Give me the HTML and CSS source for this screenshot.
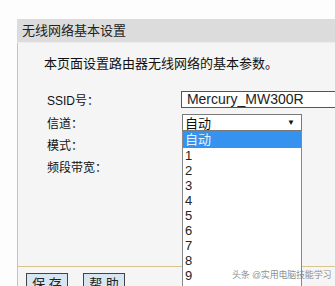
FILE: index.html
```html
<!DOCTYPE html>
<html>
<head>
<meta charset="utf-8">
<link rel="stylesheet" href="styles.css">
</head>
<body>
<div class="panel">
  <div class="head">无线网络基本设置</div>
  <div class="content">
    <p class="intro">本页面设置路由器无线网络的基本参数。</p>
    <div class="form">
      <div class="row"><span class="label">SSID号：</span><div class="input">Mercury_MW300R</div></div>
      <div class="row"><span class="label">信道：</span>
        <div class="selwrap">
          <div class="select"><span>自动</span><span class="arrow">▼</span></div>
          <ul class="list">
            <li class="sel">自动</li>
            <li>1</li><li>2</li><li>3</li><li>4</li><li>5</li><li>6</li><li>7</li><li>8</li><li>9</li><li>10</li>
          </ul>
        </div>
      </div>
      <div class="row"><span class="label">模式：</span></div>
      <div class="row"><span class="label">频段带宽：</span></div>
    </div>
  </div>
  <div class="foot">
    <span class="btn">保 存</span>
    <span class="btn">帮 助</span>
  </div>
</div>
<div class="mark">头条 @实用电脑技能学习</div>
</body>
</html>
```
FILE: styles.css
```css
html, body { margin: 0; padding: 0; }
body {
  background: #fdfdfd;
  width: 335px;
  height: 286px;
  overflow: hidden;
  position: relative;
  font-family: "Liberation Sans", "Noto Sans CJK SC", sans-serif;
  color: #111;
}
.panel {
  margin: 19px 0 0 17px;
  width: 340px;
}
.head {
  height: 23px;
  line-height: 24px;
  background: #dcdcdc;
  padding-left: 5px;
  font-size: 13px;
  color: #222;
  border-bottom: 1px solid #ececec;
}
.content {
  background: #f5f5f5;
  border-left: 1px solid #d8c48e;
  height: 222px;
  padding-top: 1px;
}
.intro {
  margin: 12px 0 0 26px;
  font-size: 13px;
  line-height: 16px;
}
.form {
  margin: 17px 0 0 29px;
}
.row {
  display: flex;
  align-items: center;
  height: 22px;
  font-size: 12px;
}
.row:first-child { height: 20px; margin-bottom: 2px; }
.label { width: 137px; }
.input {
  box-sizing: border-box;
  width: 180px;
  height: 17px;
  border: 1px solid #555;
  background: #fff;
  font-size: 14px;
  line-height: 15px;
  padding-left: 5px;
  color: #222;
}
.selwrap {
  position: relative;
  margin-left: -2px;
}
.select {
  box-sizing: border-box;
  width: 120px;
  height: 17px;
  border: 1px solid #7a7a7a;
  background: #fff;
  display: flex;
  justify-content: space-between;
  align-items: center;
  padding: 0 6px 0 2px;
  font-size: 13px;
}
.arrow { font-size: 8px; }
.list {
  position: absolute;
  left: 0;
  top: 17px;
  width: 120px;
  box-sizing: border-box;
  margin: 0;
  padding: 0;
  list-style: none;
  background: #fff;
  border: 1px solid #888;
  border-top: none;
  z-index: 5;
  height: 160px;
  overflow: hidden;
}
.list li {
  height: 15px;
  line-height: 15px;
  padding-left: 2px;
  font-size: 13px;
  color: #222;
}
.list li.sel {
  background: #3592ee;
  color: #e8f2ff;
  height: 17px;
  line-height: 17px;
}
.foot {
  border-top: 1px solid #d8c48e;
  border-left: 1px solid #d8c48e;
  background: #f5f5f5;
  height: 30px;
  padding: 6px 0 0 8px;
  display: flex;
  gap: 15px;
}
.btn {
  box-sizing: border-box;
  width: 42px;
  height: 20px;
  border: 1px solid #444;
  background: #d8e6f2;
  font-size: 13px;
  text-align: center;
  line-height: 19px;
  color: #222;
}
.mark {
  position: absolute;
  left: 232px;
  top: 268px;
  font-size: 9px;
  white-space: nowrap;
  color: rgba(120, 120, 120, 0.85);
  letter-spacing: -0.2px;
  z-index: 10;
}
```
